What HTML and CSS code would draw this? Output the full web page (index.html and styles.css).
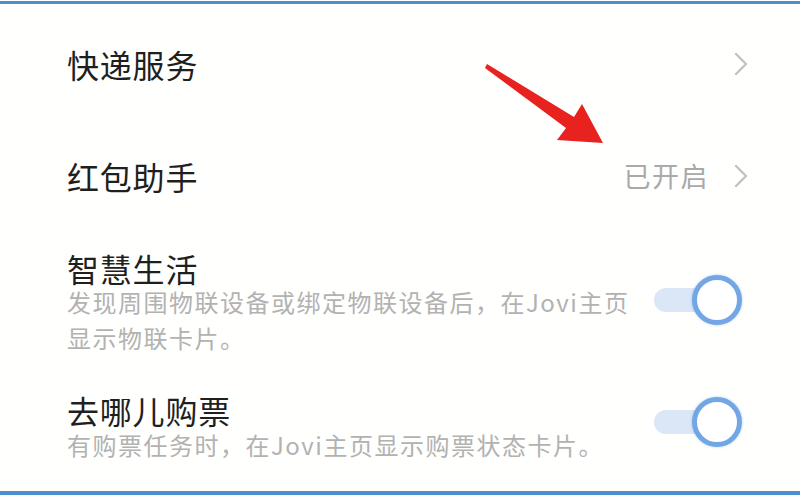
FILE: index.html
```html
<!DOCTYPE html>
<html lang="zh">
<head>
<meta charset="utf-8">
<link rel="stylesheet" href="styles.css">
</head>
<body>
<div class="frame">
  <div class="row row-nav row-first">
    <div class="title">快递服务</div>
    <div class="right">
      <svg class="chev" width="14" height="24" viewBox="0 0 14 24"><polyline points="2,2 12,12 2,22" fill="none" stroke="#c2c2c2" stroke-width="2.4" stroke-linecap="round" stroke-linejoin="round"/></svg>
    </div>
  </div>
  <div class="row row-nav row-second">
    <div class="title">红包助手</div>
    <div class="right">
      <span class="value">已开启</span>
      <svg class="chev" width="14" height="24" viewBox="0 0 14 24"><polyline points="2,2 12,12 2,22" fill="none" stroke="#c2c2c2" stroke-width="2.4" stroke-linecap="round" stroke-linejoin="round"/></svg>
    </div>
  </div>
  <div class="row row-switch row-third">
    <div class="text">
      <div class="title">智慧生活</div>
      <div class="sub">发现周围物联设备或绑定物联设备后，在Jovi主页<br>显示物联卡片。</div>
    </div>
    <div class="switch"><span class="track"></span><span class="knob"></span></div>
  </div>
  <div class="row row-switch row-fourth">
    <div class="text">
      <div class="title">去哪儿购票</div>
      <div class="sub">有购票任务时，在Jovi主页显示购票状态卡片。</div>
    </div>
    <div class="switch"><span class="track"></span><span class="knob"></span></div>
  </div>
  <svg class="arrow" width="800" height="500" viewBox="0 0 800 500">
    <polygon points="487,64 574,117 582,104 603,143 557,140 566,128 485,68" fill="#e8231f"/>
  </svg>
</div>
</body>
</html>
```
FILE: styles.css
```css
html, body {
  margin: 0;
  padding: 0;
  background: #ffffff;
}
body {
  font-family: "Noto Sans CJK SC", "Noto Sans", sans-serif;
  width: 800px;
  height: 500px;
  overflow: hidden;
}
.frame {
  position: relative;
  margin-top: 1px;
  height: 487px;
  border-top: 3px solid #4b8fd3;
  border-bottom: 4px solid #4b8fd3;
  box-sizing: content-box;
  padding: 0 52px 0 67px;
  background: #fffffe;
}
.row {
  display: flex;
  justify-content: space-between;
  align-items: center;
}
.row-first { height: 120px; }
.row-second { height: 103px; }
.row-switch { align-items: flex-start; }
.row-third { padding-top: 25px; }
.row-fourth { padding-top: 38px; }
.title {
  font-size: 32px;
  line-height: 32px;
  color: #1f1f1f;
  letter-spacing: 0.8px;
}
.right {
  display: flex;
  align-items: center;
  gap: 25px;
}
.chev { display: block; }
.value {
  font-size: 27px;
  line-height: 30px;
  color: #a9a9a9;
  letter-spacing: 1.5px;
}
.sub {
  font-size: 24px;
  line-height: 36px;
  color: #b2b2b2;
  letter-spacing: 1.5px;
}
.row-fourth .sub { line-height: 38px; }
.switch {
  position: relative;
  width: 88px;
  height: 50px;
  margin-right: 6px;
  flex-shrink: 0;
}
.row-third .switch { margin-top: 23px; }
.row-fourth .switch { margin-top: 3px; }
.track {
  position: absolute;
  left: 0;
  top: 13px;
  width: 56px;
  height: 24px;
  border-radius: 12px;
  background: #dbe7f7;
}
.knob {
  position: absolute;
  right: 0;
  top: 0;
  width: 40px;
  height: 40px;
  border-radius: 50%;
  background: #ffffff;
  border: 5px solid #72a6e4;
  box-shadow: 0 0 3px rgba(70, 120, 200, 0.35);
}
.arrow {
  position: absolute;
  left: 0;
  top: -4px;
  pointer-events: none;
}
```
